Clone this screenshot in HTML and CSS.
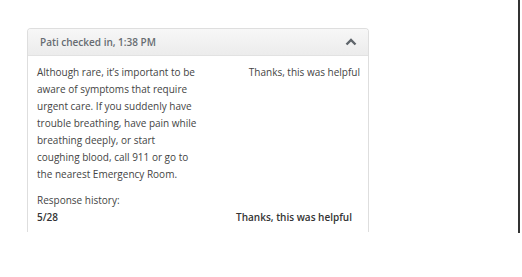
FILE: index.html
```html
<!DOCTYPE html>
<html>
<head>
<meta charset="utf-8">
<title>Check-in</title>
<link rel="stylesheet" href="styles.css">
</head>
<body>
   <div class="frame">
      <div class="panel">
         <div class="panel_heading">
            <span class="panel_title">Pati checked in, 1:38 PM</span>
            <svg class="chevron" width="12" height="8" viewBox="0 0 12 8">
               <path d="M1.5 6.5 L6 2 L10.5 6.5" fill="none" stroke="#5f656b" stroke-width="2.4"/>
            </svg>
         </div>
         <div class="panel_body">
            <div class="row">
               <div class="message">Although rare, it&rsquo;s important to be aware of symptoms that require urgent care. If you suddenly have trouble breathing, have pain while breathing deeply, or start coughing blood, call 911 or go to the nearest Emergency Room.</div>
               <div class="reply">Thanks, this was helpful</div>
            </div>
            <div class="history_label">Response history:</div>
            <div class="history_row">
               <span>5/28</span>
               <span>Thanks, this was helpful</span>
            </div>
         </div>
      </div>
   </div>
</body>
</html>
```

FILE: styles.css
```css
body
{
   margin: 0 ;
   background: #fff ;
   font-family: "Open Sans", "Liberation Sans", sans-serif ;
   color: #444 ;
}

.frame
{
   width: 520px ;
   height: 233px ;
   padding: 28px 0 0 27px ;
   box-sizing: border-box ;
   border-right: 2px solid #333 ;
   overflow: hidden ;
}

.panel
{
   width: 342px ;
   height: 204px ;
   box-sizing: border-box ;
   border: 1px solid #dedede ;
   border-bottom: none ;
   border-radius: 4px 4px 0 0 ;
   overflow: hidden ;
}

.panel_heading
{
   display: flex ;
   align-items: center ;
   justify-content: space-between ;
   height: 26px ;
   padding: 0 11px 0 12px ;
   background: linear-gradient( #f7f7f7, #ececec ) ;
   border-bottom: 1px solid #e2e2e2 ;
}

.panel_title
{
   font-size: 10px ;
   font-weight: 600 ;
   color: #676c71 ;
}

.panel_body
{
   padding: 8px 8px 0 9px ;
   font-size: 10px ;
   line-height: 17px ;
}

.row
{
   display: flex ;
   justify-content: space-between ;
}

.message
{
   width: 160px ;
}

.reply
{
   text-align: right ;
}

.history_label
{
   margin-top: 9px ;
}

.history_row
{
   display: flex ;
   justify-content: space-between ;
   padding-right: 8px ;
   font-weight: 600 ;
   color: #333 ;
}
```
